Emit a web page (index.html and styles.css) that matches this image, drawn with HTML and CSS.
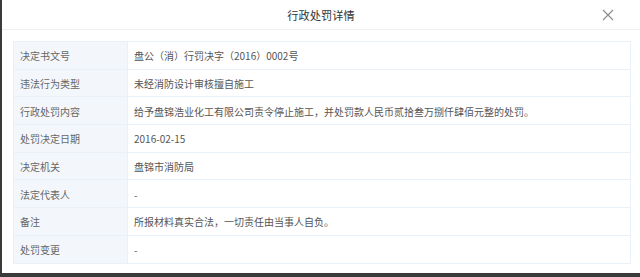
FILE: index.html
```html
<!DOCTYPE html>
<html lang="zh-CN">
<head>
<meta charset="utf-8">
<title>行政处罚详情</title>
<link rel="stylesheet" href="styles.css">
</head>
<body>
<div class="modal">
  <div class="modal-header">
    <span class="modal-title">行政处罚详情</span>
    <span class="modal-close" aria-label="关闭">
      <svg width="12" height="12" viewBox="0 0 12 12"><path d="M1 1L11 11M11 1L1 11" stroke="#8a8a8a" stroke-width="1.1" fill="none"/></svg>
    </span>
  </div>
  <div class="modal-body">
    <table class="detail">
      <tr><th>决定书文号</th><td>盘公（消）行罚决字（2016）0002号</td></tr>
      <tr><th>违法行为类型</th><td>未经消防设计审核擅自施工</td></tr>
      <tr><th>行政处罚内容</th><td>给予盘锦浩业化工有限公司责令停止施工，并处罚款人民币贰拾叁万捌仟肆佰元整的处罚。</td></tr>
      <tr><th>处罚决定日期</th><td>2016-02-15</td></tr>
      <tr><th>决定机关</th><td>盘锦市消防局</td></tr>
      <tr><th>法定代表人</th><td>-</td></tr>
      <tr><th>备注</th><td>所报材料真实合法，一切责任由当事人自负。</td></tr>
      <tr><th>处罚变更</th><td>-</td></tr>
    </table>
  </div>
</div>
</body>
</html>
```
FILE: styles.css
```css
html, body {
  margin: 0;
  padding: 0;
}

body {
  background: #3a3a3a;
  width: 640px;
  height: 277px;
  overflow: hidden;
  font-family: "Noto Sans CJK SC", "Liberation Sans", sans-serif;
}

.modal {
  margin-left: 2px;
  width: 638px;
  height: 273px;
  background: #fff;
  box-sizing: border-box;
}

.modal-header {
  height: 30px;
  box-sizing: border-box;
  border-bottom: 1px solid #f0f0f0;
  display: flex;
  align-items: center;
  justify-content: center;
  position: relative;
}

.modal-title {
  font-size: 11.2px;
  color: #333;
  letter-spacing: 0.1px;
}

.modal-close {
  position: absolute;
  right: 26px;
  top: 9px;
  width: 12px;
  height: 12px;
  display: flex;
}

.modal-body {
  padding: 11px 7px 0 11px;
}

.detail {
  width: 618px;
  border-collapse: collapse;
  border: 1px solid #e9f0f8;
  font-size: 10px;
}

.detail tr {
  height: 27.7px;
}

.detail th,
.detail td {
  border: 1px solid #e9f0f8;
  padding: 1px 6px 0;
  text-align: left;
  font-weight: normal;
  vertical-align: middle;
}

.detail th {
  width: 101px;
  background: #f3f7fc;
  color: #666;
}

.detail td {
  color: #555;
}
```
